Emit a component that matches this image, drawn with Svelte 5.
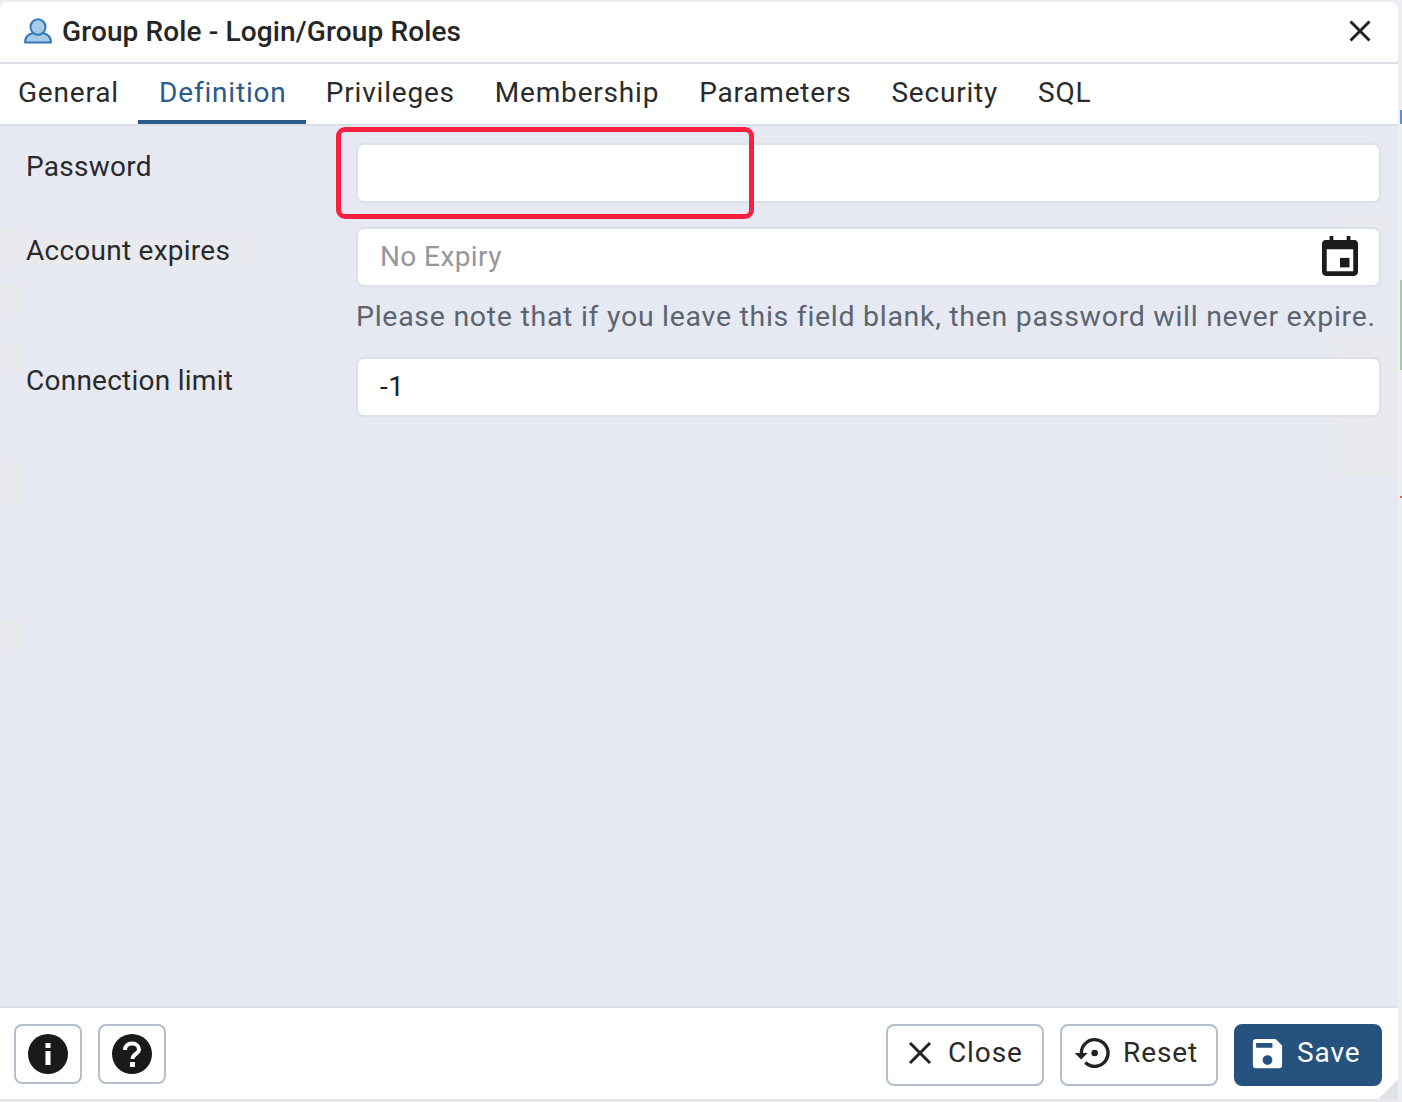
<script>
    const tabs = ["General", "Definition", "Privileges", "Membership", "Parameters", "Security", "SQL"];
    let active = "Definition";

    // faint leftovers behind the form, in page coordinates
    const patches = [
        { x: 0, y: 228, w: 21, h: 38 },
        { x: 0, y: 284, w: 21, h: 30 },
        { x: 0, y: 344, w: 21, h: 26 },
        { x: 0, y: 462, w: 22, h: 43 },
        { x: 0, y: 619, w: 22, h: 31 },
        { x: 26, y: 238, w: 228, h: 26 },
        { x: 1338, y: 337, w: 60, h: 140 },
        { x: 1338, y: 218, w: 48, h: 12 }
    ];
</script>

<div class="page">
    <div class="dialog">
        <header class="title">
            <svg class="role-icon" viewBox="0 0 30 26" width="30" height="26">
                <path d="M2 24.500c0-6 4-8.500 8-9.500h10c4 1 8 3.500 8 9.500z" fill="#a9cbe8" stroke="#2f78bd" stroke-width="2" stroke-linejoin="round" />
                <ellipse cx="15" cy="9" rx="7.500" ry="7.800" fill="#a9cbe8" stroke="#2f78bd" stroke-width="2" />
            </svg>
            <span class="title-text">Group Role - Login/Group Roles</span>
            <svg class="x" viewBox="0 0 24 24" width="24" height="24">
                <path d="M2.500 2.500l19 19M21.500 2.500l-19 19" stroke="#222" stroke-width="3" fill="none" />
            </svg>
        </header>

        <nav class="tabs">
            {#each tabs as tab}
                <div class="tab" class:active={tab === active}>{tab}</div>
            {/each}
        </nav>

        <main class="body">
            {#each patches as p}
                <div class="patch" style="left:{p.x}px;top:{p.y - 126}px;width:{p.w}px;height:{p.h}px"></div>
            {/each}
            <div class="row">
                <label class="label" for="password">Password</label>
                <div class="field">
                    <input id="password" class="input" type="text" />
                </div>
            </div>
            <div class="row">
                <label class="label" for="expires">Account expires</label>
                <div class="field">
                    <div class="date">
                        <input id="expires" class="input" type="text" placeholder="No Expiry" />
                        <svg class="cal" viewBox="0 0 38 42" width="36" height="40">
                            <path fill-rule="evenodd" fill="#1c1c1c" d="M8 0h4v4h14V0h4v4h4c2.200 0 4 1.800 4 4v30c0 2.200-1.800 4-4 4H4c-2.200 0-4-1.800-4-4V8c0-2.200 1.800-4 4-4h4zM5 14v23h28V14z" />
                            <rect x="19" y="23" width="10" height="10" fill="#1c1c1c" />
                        </svg>
                    </div>
                    <p class="note">Please note that if you leave this field blank, then password will never expire.</p>
                </div>
            </div>
            <div class="row">
                <label class="label" for="limit">Connection limit</label>
                <div class="field">
                    <input id="limit" class="input" type="text" value="-1" />
                </div>
            </div>
        </main>

        <footer class="footer">
            <div class="group">
                <button class="btn square" aria-label="Info">
                    <svg viewBox="0 0 40 40" width="40" height="40">
                        <circle cx="20" cy="20" r="20" fill="#1a1a1a" />
                        <rect x="17.500" y="17" width="5" height="14" fill="#fff" />
                        <rect x="17.500" y="9" width="5" height="5" fill="#fff" />
                    </svg>
                </button>
                <button class="btn square" aria-label="Help">
                    <svg viewBox="0 0 40 40" width="40" height="40">
                        <circle cx="20" cy="20" r="20" fill="#1a1a1a" />
                        <path d="M13 16c0-4 3-6.500 7-6.500s7 2.500 7 6c0 4.500-6.500 4.500-6.500 9.500" fill="none" stroke="#fff" stroke-width="4" />
                        <rect x="18" y="28" width="5" height="5" fill="#fff" />
                    </svg>
                </button>
            </div>
            <div class="group actions">
                <button class="btn wide close">
                    <svg viewBox="0 0 24 24" width="24" height="24">
                        <path d="M2 2l20 20M22 2L2 22" stroke="#222" stroke-width="3" fill="none" />
                    </svg>
                    <span>Close</span>
                </button>
                <button class="btn wide reset">
                    <svg viewBox="0 0 24 24" width="40" height="40">
                        <path d="M13 3a9 9 0 0 0-9 9H1l3.900 3.900L8.800 12H6a7 7 0 1 1 2.100 5l-1.400 1.400A9 9 0 1 0 13 3z" fill="#222" />
                        <circle cx="13" cy="12" r="2" fill="#222" />
                    </svg>
                    <span>Reset</span>
                </button>
                <button class="btn wide primary">
                    <svg viewBox="0 0 24 24" width="39" height="39">
                        <path fill-rule="evenodd" d="M17 3H5a2 2 0 0 0-2 2v14a2 2 0 0 0 2 2h14a2 2 0 0 0 2-2V7zm-5 16a3 3 0 1 1 0-6 3 3 0 0 1 0 6zM15 8.500H5v-3h10z" fill="#fff" />
                    </svg>
                    <span>Save</span>
                </button>
            </div>
            <div class="grip"></div>
        </footer>
    </div>

    <div class="highlight"></div>
    <div class="bleed green"></div>
    <div class="bleed orange"></div>
    <div class="bleed blue"></div>
</div>

<style>
    :global(body) {
        margin: 0;
        background: #eceef1;
    }

    .page {
        position: relative;
        width: 1402px;
        height: 1102px;
        padding-top: 2px;
        box-sizing: border-box;
        overflow: hidden;
        font-family: Roboto, "Liberation Sans", sans-serif;
        color: #222;
    }

    .dialog {
        width: 1398px;
        height: 1099px;
        display: flex;
        flex-direction: column;
        background: #fff;
        border-radius: 8px 8px 0 0;
    }

    .title {
        height: 58px;
        padding: 0 26px 2px 23px;
        flex: none;
        display: flex;
        align-items: center;
        border-bottom: 2px solid #d9dee7;
    }

    .role-icon {
        margin-right: 9px;
    }

    .title-text {
        flex: 1;
        font-size: 28px;
        font-weight: 500;
        letter-spacing: 0.13px;
        color: #262626;
    }

    .tabs {
        height: 60px;
        flex: none;
        display: flex;
        border-bottom: 2px solid #d9dee7;
    }

    .tab {
        padding: 0 20px;
        font-size: 28px;
        line-height: 57px;
        letter-spacing: 0.8px;
        color: #2a2a2a;
    }

    .tab:first-child {
        padding: 0 19.300px 0 18px;
    }

    .tab.active {
        box-sizing: border-box;
        height: 60px;
        padding: 0 19.300px 0 21px;
        color: #2b5a8b;
        border-bottom: 4px solid #2b5a8b;
    }

    .body {
        position: relative;
        flex: 1;
        display: flex;
        flex-direction: column;
        gap: 24px;
        padding: 17px 17px 0 26px;
        background: #e6e9f1;
    }

    .patch {
        position: absolute;
        background: #e9eaee;
    }

    .row {
        position: relative;
        display: flex;
    }

    .label {
        width: 330px;
        flex: none;
        font-size: 28px;
        line-height: 48px;
        letter-spacing: 0.25px;
        color: #2a2a2a;
    }

    .field {
        flex: 1;
    }

    .input {
        display: block;
        width: 100%;
        height: 60px;
        box-sizing: border-box;
        padding: 0 22px 2px;
        border: 2px solid #dde1ea;
        border-radius: 8px;
        background: #fff;
        font: 28px Roboto, "Liberation Sans", sans-serif;
        letter-spacing: 0.4px;
        color: #222;
        outline: none;
    }

    .input::placeholder {
        color: #94989e;
        opacity: 1;
    }

    .date {
        position: relative;
    }

    .cal {
        position: absolute;
        right: 23px;
        top: 9px;
    }

    .note {
        margin: 13px 0 -1px;
        font-size: 28.500px;
        line-height: 34px;
        letter-spacing: 0.71px;
        color: #5c6470;
        white-space: nowrap;
    }

    .footer {
        position: relative;
        height: 95px;
        flex: none;
        display: flex;
        justify-content: space-between;
        align-items: flex-start;
        padding: 16px 16px 0 14px;
        box-sizing: border-box;
        border-top: 2px solid #d9dee7;
        border-bottom: 2px solid #e4e6ea;
    }

    .group {
        display: flex;
        gap: 16px;
    }

    .btn {
        display: flex;
        align-items: center;
        justify-content: center;
        box-sizing: border-box;
        height: 62px;
        padding: 0;
        background: #fff;
        border: 2px solid #b4bfcd;
        border-radius: 8px;
        font: 28px Roboto, "Liberation Sans", sans-serif;
        letter-spacing: 0.9px;
        color: #2a2a2a;
    }

    .square {
        width: 68px;
        height: 60px;
    }

    .wide {
        width: 158px;
        justify-content: flex-start;
        padding-bottom: 4px;
        gap: 10px;
    }

    .wide span {
        margin-bottom: 2px;
    }

    .close {
        padding-left: 20px;
        gap: 16px;
    }

    .reset {
        padding-left: 11px;
    }

    .primary {
        width: 148px;
        padding-left: 12px;
        background: #26527f;
        border-color: #26527f;
        color: #fff;
    }

    .grip {
        position: absolute;
        right: 0;
        bottom: 0;
        width: 20px;
        height: 20px;
        background: linear-gradient(135deg, transparent 50%, #dfe2e6 50%);
    }

    .highlight {
        position: absolute;
        left: 336px;
        top: 127px;
        width: 418px;
        height: 92px;
        box-sizing: border-box;
        border: 5px solid #fb1f40;
        border-radius: 9px;
    }

    .bleed {
        position: absolute;
        left: 1400px;
        width: 2px;
    }

    .green {
        top: 280px;
        height: 90px;
        background: #a3cba5;
    }

    .orange {
        top: 496px;
        height: 2px;
        background: #d9683a;
    }

    .blue {
        top: 110px;
        height: 14px;
        background: #5b93c9;
    }
</style>
